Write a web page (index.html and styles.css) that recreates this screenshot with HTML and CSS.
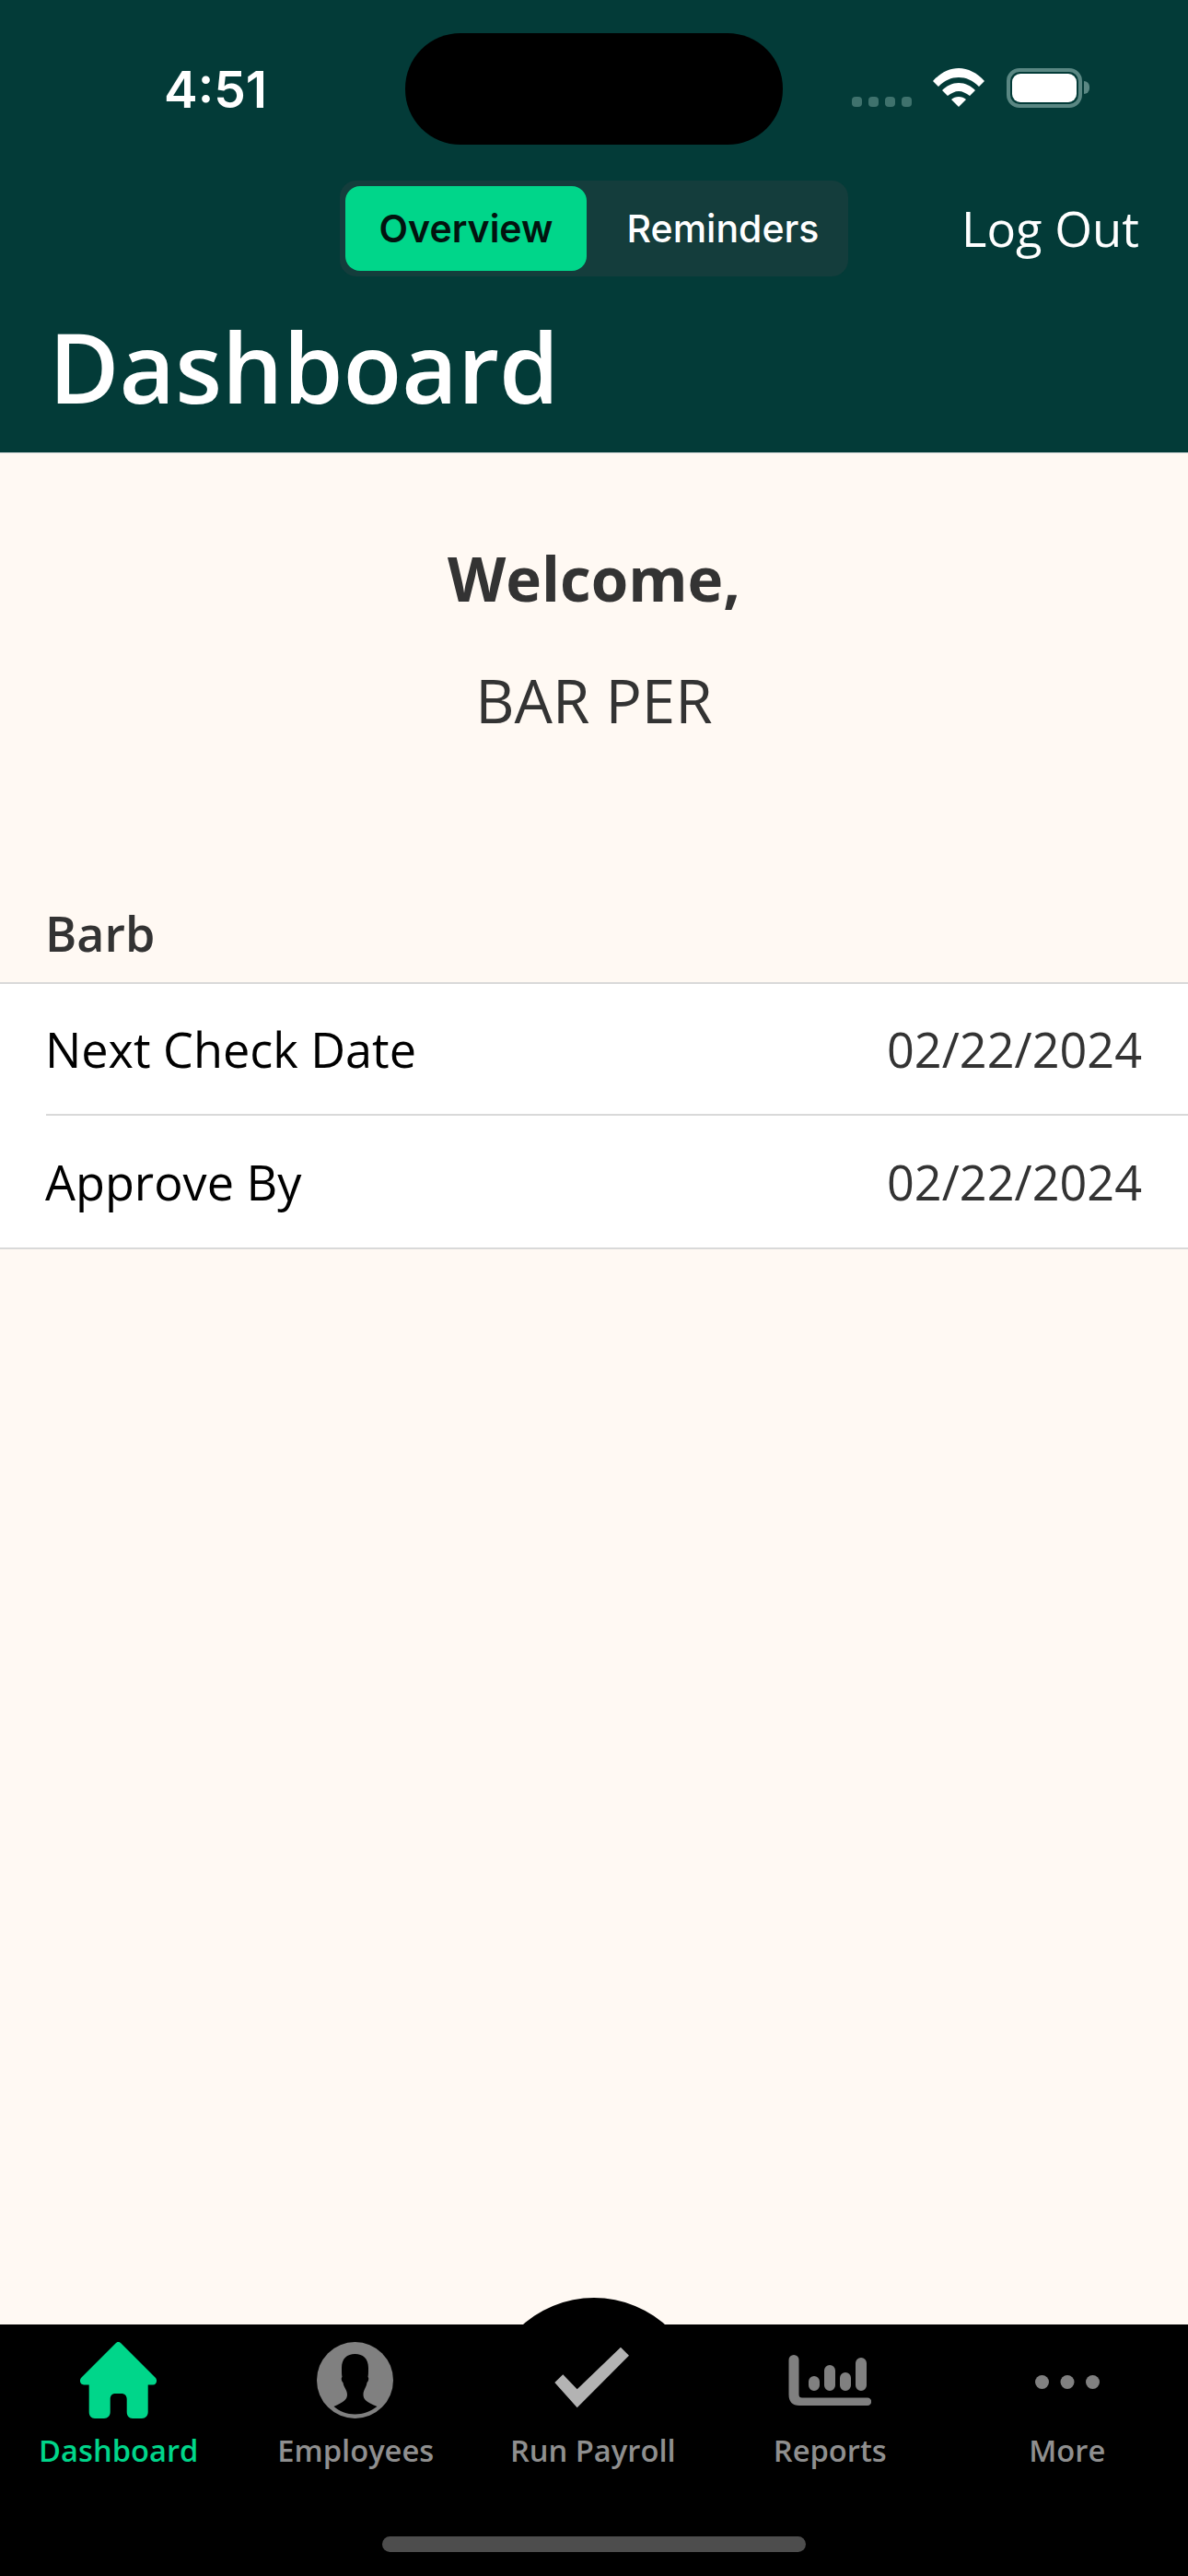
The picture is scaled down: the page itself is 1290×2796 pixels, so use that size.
FILE: index.html
```html
<!DOCTYPE html>
<html lang="en">
<head>
    <meta charset="UTF-8">
    <meta name="viewport" content="width=device-width, initial-scale=1.0">
    <title>Dashboard</title>
    <link rel="stylesheet" href="styles.css">
</head>
<body>

<div class="screen">
    <header class="top">
        <div class="status-bar">
            <span class="time">4:51</span>
            <div class="island"></div>
            <div class="status-icons">
                <div class="signal"><i></i><i></i><i></i><i></i></div>
                <svg class="wifi" width="56" height="42" viewBox="0 0 56 42">
                    <path d="M0 14 C8 5 18 0 28 0 C38 0 48 5 56 14 L50 20 C43 13 36 10 28 10 C20 10 13 13 6 20 Z" fill="#fff"/>
                    <path d="M10 24 C15 19 21 16 28 16 C35 16 41 19 46 24 L40 30 C36 27 32 25 28 25 C24 25 20 27 16 30 Z" fill="#fff"/>
                    <path d="M20 34 C22 32 25 31 28 31 C31 31 34 32 36 34 L28 42 Z" fill="#fff"/>
                </svg>
                <div class="battery"><div class="battery-fill"></div></div>
                <div class="battery-tip"></div>
            </div>
        </div>
        <div class="nav-row">
            <div class="segments">
                <span class="segment active">Overview</span>
                <span class="segment">Reminders</span>
            </div>
            <span class="logout">Log Out</span>
        </div>
        <h1>Dashboard</h1>
    </header>

    <main class="content">
        <div class="welcome">
            <h2>Welcome,</h2>
            <p>BAR PER</p>
        </div>
        <div class="section-title">Barb</div>
        <div class="list">
            <div class="row">
                <span>Next Check Date</span>
                <span class="value">02/22/2024</span>
            </div>
            <div class="row">
                <span>Approve By</span>
                <span class="value">02/22/2024</span>
            </div>
        </div>
    </main>

    <nav class="tabbar">
        <div class="bump"></div>
        <div class="tabs">
            <div class="tab active">
                <svg width="84" height="84" viewBox="0 0 84 84">
                    <path d="M41.500 0 C42.500 0 43.500 .5 44 1 L81.500 38.500 C84.500 41.500 83 46.500 79 46.500 L73.700 46.500 L73.700 76 C73.700 80 71 83 67 83 L57 83 C53 83 50.700 80 50.700 76 L50.700 62 C50.700 58 48 56 45 56 L38 56 C35 56 32.700 58 32.700 62 L32.700 76 C32.700 80 30 83 26 83 L16 83 C12 83 9.700 80 9.700 76 L9.700 46.500 L4 46.500 C0 46.500 -1.500 41.500 1.500 38.500 L39 1 C39.500 .5 40.500 0 41.500 0 Z" fill="#00d68a"/>
                </svg>
                <span>Dashboard</span>
            </div>
            <div class="tab">
                <svg width="84" height="84" viewBox="0 0 84 84">
                    <circle cx="41.500" cy="41.500" r="41.500" fill="#808080"/>
                    <path d="M41.500 13 C50 13 56 18 56 28 C56 33 56 36 55.500 38 C57 39 56 43 54.500 44 C54 49 50.500 52 50.500 57 C50.500 62 53 65 65.500 70 C59 75 50 78.500 41.500 78.500 C33 78.500 24 75 18.500 70 C30 65 33 62 33 57 C33 52 29 49 28.500 44 C27 43 26 39 27.500 38 C27 36 27 33 27 28 C27 18 33 13 41.500 13 Z" fill="#000"/>
                </svg>
                <span>Employees</span>
            </div>
            <div class="tab">
                <svg width="84" height="84" viewBox="0 0 84 84">
                    <path d="M.3 44 L9.300 35.300 L24.700 51.300 L72 5.700 L81 14.700 L24.700 71.300 Z" fill="#b3b3b3"/>
                </svg>
                <span>Run Payroll</span>
            </div>
            <div class="tab">
                <svg width="90" height="84" viewBox="0 0 90 84">
                    <path d="M.5 19.500 A5.500 5.500 0 0 1 11.500 19.500 L11.500 57 Q11.500 60.500 15 60.500 L86 60.500 A4.200 4.200 0 0 1 86 68.900 L12 68.900 Q.5 68.900 .5 57 Z" fill="#808080"/>
                    <path d="M28 43 L28 47 M45 31 L45 47 M62 39 L62 47 M79 23 L79 47" fill="none" stroke="#808080" stroke-width="12" stroke-linecap="round"/>
                </svg>
                <span>Reports</span>
            </div>
            <div class="tab">
                <svg width="70" height="84" viewBox="0 0 70 84">
                    <circle cx="7.500" cy="43.500" r="7.500" fill="#808080"/>
                    <circle cx="35" cy="43.500" r="7.500" fill="#808080"/>
                    <circle cx="62.500" cy="43.500" r="7.500" fill="#808080"/>
                </svg>
                <span>More</span>
            </div>
        </div>
        <div class="home-bar"></div>
    </nav>
</div>

</body>
</html>
```

FILE: styles.css
```css
* {
    box-sizing: border-box;
}
body {
    margin: 0;
    padding: 0;
    font-family: "Open Sans", sans-serif;
    background-color: #fff9f3;
}
.screen {
    width: 1290px;
    height: 2796px;
    display: flex;
    flex-direction: column;
    overflow: hidden;
}
.top {
    height: 492px;
    background-color: #033b38;
    color: white;
    border-bottom: 1px solid #cfd6d6;
}
.status-bar {
    height: 157px;
    padding-top: 36px;
    display: flex;
    align-items: center;
    position: relative;
}
.time {
    font-family: Inter, sans-serif;
    font-weight: 600;
    font-size: 55px;
    width: 440px;
    padding-left: 178px;
}
.island {
    width: 410px;
    height: 121px;
    border-radius: 60px;
    background-color: #000;
}
.status-icons {
    position: absolute;
    left: 925px;
    top: 74px;
    display: flex;
    align-items: flex-start;
}
.signal {
    display: flex;
    gap: 7px;
    margin-top: 31px;
    margin-right: 23px;
}
.signal i {
    width: 11px;
    height: 11px;
    border-radius: 4px;
    background-color: #3f726d;
}
.wifi {
    margin-right: 24px;
}
.battery {
    width: 82px;
    height: 43px;
    border: 4px solid #5a8783;
    border-radius: 14px;
    padding: 2px;
}
.battery-fill {
    width: 100%;
    height: 100%;
    background-color: #fff;
    border-radius: 9px;
}
.battery-tip {
    width: 6px;
    height: 14px;
    margin-top: 14px;
    margin-left: 2px;
    background-color: #5a8783;
    border-radius: 0 7px 7px 0;
}
.nav-row {
    height: 143px;
    padding-top: 39px;
    display: flex;
    align-items: flex-start;
    padding-left: 369px;
}
.segments {
    width: 552px;
    height: 104px;
    padding: 6px;
    display: flex;
    background-color: #143d3c;
    border-radius: 18px;
}
.segment {
    font-family: Inter, sans-serif;
    font-size: 41px;
    font-weight: 500;
    line-height: 92px;
    text-align: center;
    flex: 1;
    padding-left: 18px;
}
.segment.active {
    flex: 0 0 262px;
    padding-left: 0;
    background-color: #00d68a;
    color: #02130f;
    font-weight: 600;
    border-radius: 16px;
}
.logout {
    font-size: 52.5px;
    margin-left: 123px;
    line-height: 104px;
}
h1 {
    margin: 0;
    padding-left: 53px;
    font-size: 104.5px;
    font-weight: 600;
    line-height: 120px;
    margin-top: 38px;
}
.content {
    flex: 1;
}
.welcome {
    text-align: center;
    color: #333;
    padding-top: 92px;
}
.welcome h2 {
    margin: 0;
    font-size: 65.5px;
    font-weight: 700;
    line-height: 88px;
}
.welcome p {
    margin: 0;
    font-size: 65.5px;
    line-height: 88px;
    margin-top: 44px;
}
.section-title {
    margin-top: 174px;
    padding-left: 49px;
    font-size: 52px;
    font-weight: 600;
    color: #333;
    line-height: 70px;
}
.list {
    margin-top: 18px;
    background-color: #fff;
    border-top: 2px solid #d9d9d9;
    border-bottom: 2px solid #d9d9d9;
}
.row {
    height: 143px;
    margin-left: 50px;
    padding-right: 50px;
    display: flex;
    justify-content: space-between;
    align-items: center;
    font-size: 52.2px;
    color: #000;
    border-bottom: 2px solid #d9d9d9;
}
.row span:first-child {
    margin-left: -1px;
}
.row:last-child {
    border-bottom: none;
}
.value {
    color: #333;
}
.tabbar {
    height: 273px;
    background-color: #000;
    position: relative;
}
.bump {
    position: absolute;
    left: 528px;
    top: -29px;
    width: 234px;
    height: 234px;
    border-radius: 50%;
    background-color: #000;
}
.tabs {
    position: relative;
    display: flex;
    padding-top: 19px;
}
.tab {
    width: 257.5px;
    display: flex;
    flex-direction: column;
    align-items: center;
    font-size: 32.7px;
    font-weight: 600;
    color: #8f8f8f;
}
.tab span {
    margin-top: 12px;
    line-height: 44px;
}
.tab.active {
    color: #00d68a;
}
.home-bar {
    position: absolute;
    left: 415px;
    top: 230px;
    width: 460px;
    height: 17px;
    border-radius: 9px;
    background-color: #4d4d4d;
}
```
